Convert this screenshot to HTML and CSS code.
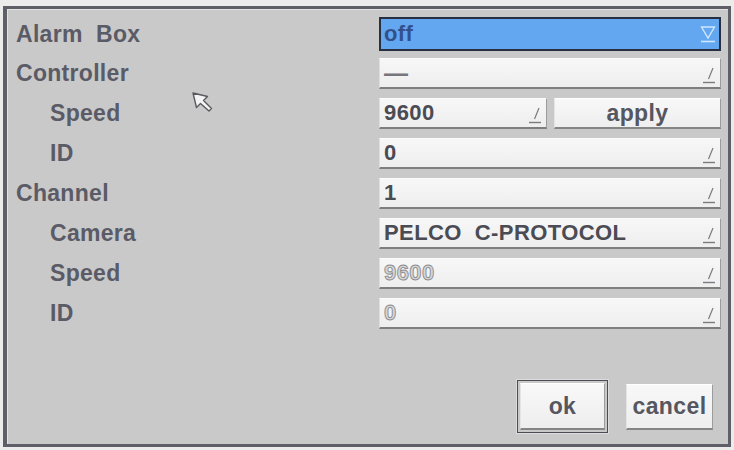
FILE: index.html
```html
<!DOCTYPE html>
<html>
<head>
<meta charset="utf-8">
<link rel="stylesheet" href="styles.css">
</head>
<body>
<div class="frame">
  <div class="rows">
    <div class="row first">
      <div class="label">Alarm&nbsp;&nbsp;Box</div>
      <div class="field selected">
        <span class="val">off</span>
        <svg class="ico" width="16" height="22" viewBox="0 0 16 22"><path d="M1.5 4 L14.5 4 L8 15 Z" fill="none" stroke="#cfe6ff" stroke-width="1.4"/><path d="M1 18.5 L15 18.5" stroke="#cfe6ff" stroke-width="1.6"/></svg>
      </div>
    </div>
    <div class="row">
      <div class="label">Controller</div>
      <div class="field">
        <span class="val dash">—</span>
        <svg class="ico" width="14" height="22" viewBox="0 0 14 22"><path d="M11 6 L6.5 17" stroke="#7a7a80" stroke-width="1.2"/><path d="M1 20.5 L13 20.5" stroke="#7a7a80" stroke-width="1.4"/></svg>
      </div>
    </div>
    <div class="row">
      <div class="label sub">Speed</div>
      <div class="pair">
        <div class="field half">
          <span class="val">9600</span>
          <svg class="ico" width="14" height="22" viewBox="0 0 14 22"><path d="M11 6 L6.5 17" stroke="#7a7a80" stroke-width="1.2"/><path d="M1 20.5 L13 20.5" stroke="#7a7a80" stroke-width="1.4"/></svg>
        </div>
        <div class="btn apply">apply</div>
      </div>
    </div>
    <div class="row">
      <div class="label sub">ID</div>
      <div class="field">
        <span class="val">0</span>
        <svg class="ico" width="14" height="22" viewBox="0 0 14 22"><path d="M11 6 L6.5 17" stroke="#7a7a80" stroke-width="1.2"/><path d="M1 20.5 L13 20.5" stroke="#7a7a80" stroke-width="1.4"/></svg>
      </div>
    </div>
    <div class="row">
      <div class="label">Channel</div>
      <div class="field">
        <span class="val">1</span>
        <svg class="ico" width="14" height="22" viewBox="0 0 14 22"><path d="M11 6 L6.5 17" stroke="#7a7a80" stroke-width="1.2"/><path d="M1 20.5 L13 20.5" stroke="#7a7a80" stroke-width="1.4"/></svg>
      </div>
    </div>
    <div class="row">
      <div class="label sub">Camera</div>
      <div class="field">
        <span class="val">PELCO&nbsp;&nbsp;C-PROTOCOL</span>
        <svg class="ico" width="14" height="22" viewBox="0 0 14 22"><path d="M11 6 L6.5 17" stroke="#7a7a80" stroke-width="1.2"/><path d="M1 20.5 L13 20.5" stroke="#7a7a80" stroke-width="1.4"/></svg>
      </div>
    </div>
    <div class="row">
      <div class="label sub">Speed</div>
      <div class="field">
        <span class="val dim">9600</span>
        <svg class="ico" width="14" height="22" viewBox="0 0 14 22"><path d="M11 6 L6.5 17" stroke="#7a7a80" stroke-width="1.2"/><path d="M1 20.5 L13 20.5" stroke="#7a7a80" stroke-width="1.4"/></svg>
      </div>
    </div>
    <div class="row">
      <div class="label sub">ID</div>
      <div class="field">
        <span class="val dim">0</span>
        <svg class="ico" width="14" height="22" viewBox="0 0 14 22"><path d="M11 6 L6.5 17" stroke="#7a7a80" stroke-width="1.2"/><path d="M1 20.5 L13 20.5" stroke="#7a7a80" stroke-width="1.4"/></svg>
      </div>
    </div>
  </div>
  <div class="actions">
    <div class="focus"><div class="btn ok">ok</div></div>
    <div class="btn cancel">cancel</div>
  </div>
  <svg class="cursor" width="26" height="24" viewBox="0 0 26 24"><path d="M2 2 L5.5 16.5 L9.5 12.5 L18 20 L20.5 17.5 L12.5 9.5 L16.5 5.5 Z" fill="#f4f4f4" stroke="#5a5a5e" stroke-width="1.4" stroke-linejoin="round"/></svg>
</div>
</body>
</html>
```
FILE: styles.css
```css
html, body {
  margin: 0;
  padding: 0;
}
body {
  background: #ececec;
  width: 734px;
  height: 450px;
  overflow: hidden;
  font-family: "Liberation Sans", Arial, sans-serif;
  font-weight: bold;
  font-size: 22px;
  letter-spacing: 0.4px;
}
.frame {
  position: relative;
  box-sizing: border-box;
  margin: 6px 3px 0 3px;
  width: 728px;
  height: 441px;
  border: 3px solid #5f5f67;
  border-left-width: 4px;
  background: #c9c9c9;
  box-shadow: inset 1px 1px 0 #e2e2e2;
  padding: 8px 7px 11px 8px;
  display: flex;
  flex-direction: column;
}
.rows {
  display: flex;
  flex-direction: column;
}
.row {
  display: flex;
  align-items: center;
  height: 31px;
  margin-bottom: 9px;
}
.row.first {
  height: 34px;
  margin-bottom: 7px;
}
.label {
  flex: 1;
  padding-left: 1px;
  font-size: 23px;
  letter-spacing: 0.3px;
  color: #5a5b66;
}
.label.sub {
  padding-left: 35px;
}
.field {
  box-sizing: border-box;
  width: 342px;
  height: 100%;
  display: flex;
  align-items: center;
  justify-content: space-between;
  padding: 0 4px 0 4px;
  background: linear-gradient(#f7f7f7, #eeeeee);
  border-top: 1px solid #fbfbfb;
  border-left: 1px solid #dedede;
  border-right: 1px solid #9c9c9c;
  border-bottom: 2px solid #7e7e7e;
  color: #4b4b53;
}
.field.selected {
  background: #62a7ef;
  border: 2px solid #263040;
  padding-left: 3px;
  padding-right: 3px;
  color: #34508a;
}
.field.half {
  width: 168px;
}
.val {
  white-space: nowrap;
}
.val.dash {
  font-size: 24px;
  color: #76767c;
  letter-spacing: 0;
}
.val.dim {
  color: #d6d6d6;
  -webkit-text-stroke: 0.9px #8c8c90;
}
.ico {
  flex: none;
}
.pair {
  width: 342px;
  height: 100%;
  display: flex;
  gap: 7px;
}
.btn {
  box-sizing: border-box;
  display: flex;
  align-items: center;
  justify-content: center;
  background: linear-gradient(#f8f8f8, #eeeeee);
  border-top: 1px solid #ffffff;
  border-left: 1px solid #e4e4e4;
  border-right: 1px solid #9c9c9c;
  border-bottom: 2px solid #858585;
  color: #55565f;
  font-size: 23px;
}
.btn.apply {
  flex: 1;
  height: 100%;
}
.actions {
  margin-top: auto;
  display: flex;
  justify-content: flex-end;
  align-items: center;
  gap: 18px;
  padding-right: 8px;
}
.focus {
  border: 1px solid #4c4c52;
  padding: 2px;
  box-shadow: 0 0 0 1px #dcdcdc;
}
.btn.ok {
  width: 85px;
  height: 47px;
}
.btn.cancel {
  width: 87px;
  height: 46px;
}
.cursor {
  position: absolute;
  left: 184px;
  top: 82px;
}
```
